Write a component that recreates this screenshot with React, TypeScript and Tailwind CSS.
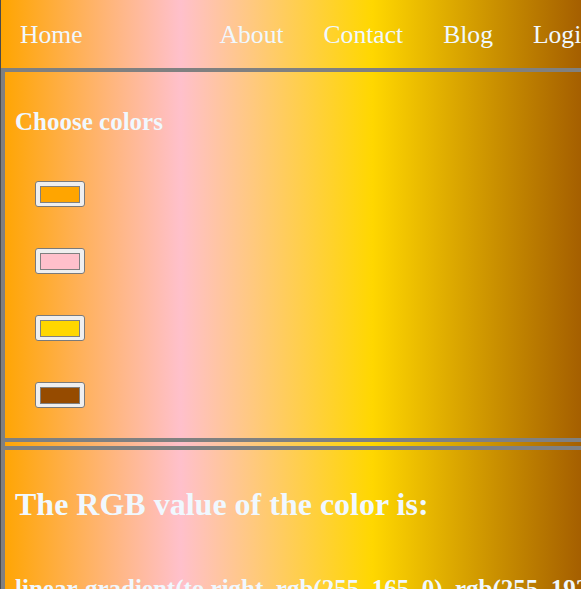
import React from 'react'

const swatches = ['#ffa500', '#ffc0cb', '#ffd700', '#964b00']

function ColorBox({ color }: { color: string }) {
  return (
    <div className="ml-5 flex h-[26px] w-[50px] items-center justify-center rounded-[3px] border border-[#7a7a7a] bg-[#efefef]">
      <div className="h-[17px] w-[40px] border border-[#808080]" style={{ backgroundColor: color }} />
    </div>
  )
}

export default function App() {
  return (
    <div className="h-[589px] w-full overflow-hidden bg-[#4b4b4b] pl-px font-['Liberation_Serif',serif] text-[#f0f8ff]">
      <div className="h-full w-[580px] bg-[linear-gradient(to_right,#ffa500_0%,#ffc0cb_31%,#ffd700_64%,#964b00_106%)]">
        <nav className="flex h-[68px] items-center whitespace-nowrap pl-[19px] text-[25.6px] leading-[29px]">
          <span>Home</span>
          <div className="ml-[137px] flex gap-10">
            <span>About</span>
            <span>Contact</span>
            <span>Blog</span>
            <span>Login</span>
          </div>
        </nav>

        <div className="border-l-4 border-[#808080]">
          <section className="h-[374px] border-y-4 border-[#808080] px-[10px]">
            <h2 className="pt-[35px] text-[25px] font-bold leading-[29px]">Choose colors</h2>
            <div className="mt-[45px] flex flex-col gap-[41px]">
              {swatches.map((c) => (
                <ColorBox key={c} color={c} />
              ))}
            </div>
          </section>

          <div className="h-1" />

          <section className="border-t-4 border-[#808080] px-[10px]">
            <h1 className="pt-9 text-[32px] font-bold leading-[37px] whitespace-nowrap">
              The RGB value of the color is:
            </h1>
            <p className="mt-[51px] whitespace-nowrap text-[25px] font-bold leading-[29px]">
              linear-gradient(to right, rgb(255, 165, 0), rgb(255, 192, 203), rgb(255, 215, 0), rgb(150, 75, 0))
            </p>
          </section>
        </div>
      </div>
    </div>
  )
}
